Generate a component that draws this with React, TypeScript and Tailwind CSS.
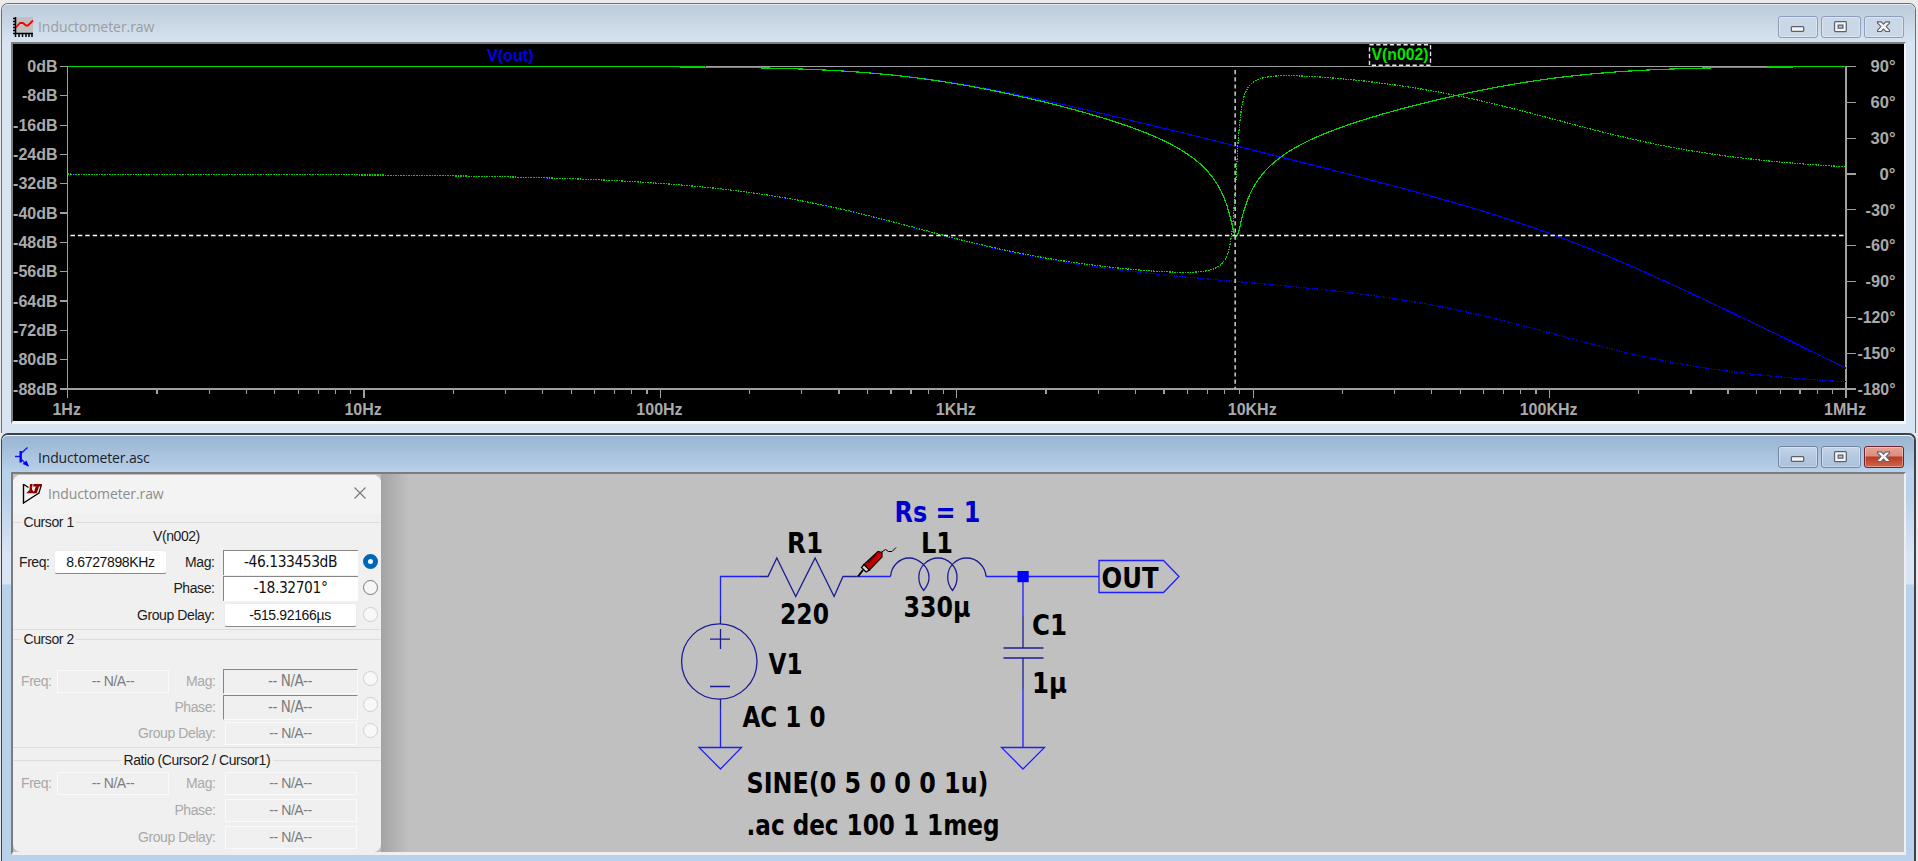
import React from "react";

/* ---------- AC response of the RLC network ---------- */

const R = 220;
const RS = 1;
const L = 330e-6;
const C = 1e-6;

const X0 = 67.2;
const X1 = 1845.5;
const Y0 = 66.5;
const Y1 = 389;
const DECADE = (X1 - X0) / 6;

const yMag = (db: number) => Y0 + (-db / 88) * (Y1 - Y0);
const yPhase = (deg: number) => Y0 + ((90 - deg) / 270) * (Y1 - Y0);

function buildTraces() {
  const outMag: string[] = [];
  const outPhase: string[] = [];
  const nMag: string[] = [];
  const nPhase: string[] = [];
  for (let i = 0; i <= 600; i++) {
    const w = 2 * Math.PI * Math.pow(10, i / 100);
    const x = (X0 + (i / 100) * DECADE).toFixed(2);
    const reactance = w * L - 1 / (w * C);
    const total = Math.hypot(R + RS, reactance);
    const totalAngle = Math.atan2(reactance, R + RS);
    const deg = 180 / Math.PI;
    outMag.push(`${x},${yMag(20 * Math.log10(1 / (w * C) / total)).toFixed(2)}`);
    outPhase.push(`${x},${yPhase(-90 - totalAngle * deg).toFixed(2)}`);
    nMag.push(`${x},${yMag(20 * Math.log10(Math.hypot(RS, reactance) / total)).toFixed(2)}`);
    nPhase.push(`${x},${yPhase((Math.atan2(reactance, RS) - totalAngle) * deg).toFixed(2)}`);
  }
  return {
    outMag: outMag.join(" "),
    outPhase: outPhase.join(" "),
    nMag: nMag.join(" "),
    nPhase: nPhase.join(" "),
  };
}

const traces = buildTraces();
const freqLabels = ["1Hz", "10Hz", "100Hz", "1KHz", "10KHz", "100KHz", "1MHz"];
const dbLabels = Array.from({ length: 12 }, (_, i) => `${i === 0 ? 0 : -8 * i}dB`);
const phaseLabels = Array.from({ length: 10 }, (_, i) => `${90 - 30 * i}°`);

function Plot() {
  return (
    <svg
      className="block h-full w-full bg-black font-['Liberation_Sans',sans-serif] text-[16px] font-bold"
      viewBox="13 44 1890 377"
    >
      <g stroke="#a0a0a0" strokeWidth="1.2" fill="none" shapeRendering="crispEdges">
        <path d={`M${X0} ${Y0}H1855M${X0} ${Y0}V398M${X1} ${Y0}V398M59 ${Y1}H1855`} />
        {dbLabels.map((t, i) => (
          <path key={t} d={`M59 ${Y0 + (i * (Y1 - Y0)) / 11}H${X0}`} />
        ))}
        {phaseLabels.map((t, i) => (
          <path key={t} d={`M${X1} ${Y0 + (i * (Y1 - Y0)) / 9}H1855`} />
        ))}
        {freqLabels.map((t, i) => (
          <path key={t} d={`M${X0 + i * DECADE} ${Y1}V398`} />
        ))}
        {[0, 1, 2, 3, 4, 5].flatMap((d) =>
          [2, 3, 4, 5, 6, 7, 8, 9].map((m) => (
            <path key={`${d}-${m}`} d={`M${X0 + (d + Math.log10(m)) * DECADE} ${Y1}V394`} />
          ))
        )}
      </g>
      <g fill="#aaaaaa">
        {dbLabels.map((t, i) => (
          <text key={t} x="57" y={Y0 + (i * (Y1 - Y0)) / 11 + 5.5} textAnchor="end">
            {t}
          </text>
        ))}
        {phaseLabels.map((t, i) => (
          <text
            key={t}
            x="1895"
            y={Y0 + (i * (Y1 - Y0)) / 9 + 5.7}
            textAnchor="end"
            textLength={[25, 25, 25, 16, 30, 30, 30, 38, 38, 38][i]}
            lengthAdjust="spacingAndGlyphs"
          >
            {t}
          </text>
        ))}
        {freqLabels.map((t, i) => (
          <text key={t} x={X0 + i * DECADE - 1} y="414.8" textAnchor="middle">
            {t}
          </text>
        ))}
      </g>
      <g fill="none" strokeWidth="1.2" shapeRendering="crispEdges">
        <polyline points={traces.outPhase} stroke="#0000e0" strokeDasharray="1.6 1" />
        <polyline points={traces.outMag} stroke="#0000f0" />
        <polyline points={traces.nPhase} stroke="#00d000" strokeDasharray="1.6 1" />
        <polyline points={traces.nMag} stroke="#00d800" />
      </g>
      <path d="M70 235.5H1845" stroke="#ffffff" strokeWidth="1.5" strokeDasharray="4.4 3" />
      <path d="M1234.7 70V389" stroke="#bcbcbc" strokeWidth="1.7" strokeDasharray="4.2 3" />
      <text x="486.5" y="60.5" fill="#0000f0" textLength="46.5" lengthAdjust="spacingAndGlyphs">
        V(out)
      </text>
      <rect x="1369" y="44.8" width="61" height="20.5" fill="none" stroke="#e6e6e6" strokeWidth="1.4" strokeDasharray="4.2 2.6" />
      <text x="1371" y="60" fill="#00e800" textLength="57" lengthAdjust="spacingAndGlyphs">
        V(n002)
      </text>
    </svg>
  );
}

/* ---------- Schematic ---------- */

const labels: { t: string; x: number; y: number; w: number; blue?: boolean }[] = [
  { t: "Rs = 1", x: 894, y: 521.5, w: 86, blue: true },
  { t: "R1", x: 786.5, y: 552.8, w: 36 },
  { t: "L1", x: 920.5, y: 552.8, w: 32 },
  { t: "220", x: 779.5, y: 623.5, w: 49 },
  { t: "330µ", x: 903, y: 617.3, w: 67 },
  { t: "V1", x: 768, y: 673.5, w: 34 },
  { t: "AC 1 0", x: 742, y: 726.5, w: 83 },
  { t: "SINE(0 5 0 0 0 1u)", x: 746, y: 792.5, w: 242 },
  { t: ".ac dec 100 1 1meg", x: 746, y: 834.8, w: 253 },
  { t: "C1", x: 1031.5, y: 634.8, w: 35 },
  { t: "1µ", x: 1031.5, y: 692.5, w: 35 },
  { t: "OUT", x: 1101, y: 587.5, w: 57 },
];

function Schematic() {
  return (
    <svg
      className="block h-full w-full bg-[#c0c0c0] font-['DejaVu_Sans_Condensed','DejaVu_Sans',sans-serif] text-[27.5px] font-bold"
      viewBox="13 474 1890 378"
    >
      <g fill="none" stroke="#1f1fff" strokeWidth="1.3">
        <path d="M758 576.5H720V616M720 709V747.5M857 576.5H890M985.5 576.5H1098.5M1022.5 576.5V616M1022.5 689V747.5" />
        <path d="M698.5 747.5H741L720 769ZM1001 747.5H1044L1022.5 769Z" />
        <path d="M1098.5 560.5H1163L1178.5 576.5L1163 592.5H1098.5Z" />
      </g>
      <g fill="none" stroke="#1c1c94" strokeWidth="1.3">
        <path d="M758 576.5H767.5L776.3 558L795.2 596.5L814.6 558L833.6 596.5L842.5 576.5H857" />
        <path d="M720 616V624M720 699V709M709.5 639.2H729.5M720 629V649M709.5 686.5H729.5" />
        <circle cx="718.8" cy="661.5" r="37.7" />
        <path d="M1022.5 616V648M1003 648H1043M1003 658H1043M1022.5 658V689" />
        <path d="M890 576.5C891 566 899 558 908.5 558C917 558 929 566 928.5 578C928.5 584 925 588 923.3 590.5C921 588 918.3 584 918.3 577C918.3 566 928 558 937.5 558C947 558 957 566 956.5 578C956.5 584 954 588 952 590.5C950 588 947.2 584 947.2 577C947.2 566 956 558 966 558C977 558 985 567 985.5 576.5" />
      </g>
      <rect x="1017" y="571" width="11.2" height="11.2" fill="#0000ff" />
      {/* voltage probe cursor */}
      <path d="M857.5 576.5L862.5 570" stroke="#000" strokeWidth="2" />
      <path d="M861 567.5L865.5 572L869 570L863.5 564.5Z" fill="#d8d8d8" stroke="#000" strokeWidth="1.3" />
      <path d="M863.5 564.5L877.5 551.5L881.5 552.5V557L869 570Z" fill="#c40000" stroke="#1a0000" strokeWidth="1.2" />
      <path d="M867.5 563L875.5 555" stroke="#600000" strokeWidth="1.2" />
      <path d="M881 552L885 549.5L888 551.5L891.5 551.5L895.5 547.5" fill="none" stroke="#000" strokeWidth="1" />
      {labels.map((l) => (
        <text
          key={l.t}
          x={l.x}
          y={l.y}
          fill={l.blue ? "#0000cc" : "#000000"}
          textLength={l.w}
          lengthAdjust="spacingAndGlyphs"
        >
          {l.t}
        </text>
      ))}
    </svg>
  );
}

/* ---------- Window chrome ---------- */

function Glyph({ kind }: { kind: "min" | "max" | "close" }) {
  return (
    <svg className="h-[22px] w-[40px]" viewBox="0 0 40 22">
      {kind === "min" && <rect x="13" y="10.6" width="13" height="5" rx="1" fill="#f4f4f4" stroke="#5a6070" strokeWidth="1.3" />}
      {kind === "max" && (
        <>
          <rect x="13.2" y="5.4" width="12.4" height="10.4" rx="1" fill="#f4f4f4" stroke="#5a6070" strokeWidth="1.3" />
          <rect x="17" y="9" width="5" height="3.2" fill="#b5c6da" stroke="#5a6070" strokeWidth="1.3" />
        </>
      )}
      {kind === "close" && (
        <path
          d="M13.2 5.6H17.2L19.5 8L21.8 5.6H25.8V6.9L22.3 10.6L25.8 14.4V15.7H21.8L19.5 13.2L17.2 15.7H13.2V14.4L16.7 10.6L13.2 6.9Z"
          fill="#f6f6f6"
          stroke="#5a6070"
          strokeWidth="1.2"
        />
      )}
    </svg>
  );
}

function WindowButtons({ active }: { active?: boolean }) {
  const plain = active
    ? "border-[#6f86a5] bg-linear-to-b from-[#c3d4e8] via-[#b4c8df] via-50% to-[#a9c2dd]"
    : "border-[#8e9dbb] bg-[#c9d7e6]";
  const close = active
    ? "border-[#6b2430] bg-[linear-gradient(#e6a295_0%,#dc8d7e_45%,#bd3a22_50%,#cd6650_100%)]"
    : plain;
  const box = "flex h-[22px] w-[40px] items-center justify-center rounded-[3px] border shadow-[inset_0_0_0_1px_rgba(255,255,255,0.35)]";
  return (
    <div className="flex gap-[3px]">
      <div className={`${box} ${plain}`}><Glyph kind="min" /></div>
      <div className={`${box} ${plain}`}><Glyph kind="max" /></div>
      <div className={`${box} ${close}`}><Glyph kind="close" /></div>
    </div>
  );
}

function PlotIcon() {
  return (
    <svg className="h-[22px] w-[22px]" viewBox="0 0 22 22">
      <rect x="4" y="1" width="17" height="16" fill="#c0c0c0" />
      <path d="M3.5 1V18M3 17.5H21" stroke="#000" strokeWidth="1.6" />
      <path d="M1 2.5H3M1 5.5H3M1 8.5H3M1 11.5H3M1 14.5H3M1 17.5H3M3.5 18V21M7 18V21M10.5 18V21M14 18V21M17 18V21M20 18V21" stroke="#000" strokeWidth="1.5" />
      <path d="M4 11.5L8 7H11L14 9.5H16L21 4.5" fill="none" stroke="#ff0000" strokeWidth="1.8" />
    </svg>
  );
}

function TransistorIcon() {
  return (
    <svg className="h-[22px] w-[16px]" viewBox="0 0 16 22">
      <path d="M0 10.5H5M12.5 1.5L6 7.5M6 13L13 20" stroke="#1414ff" strokeWidth="1.4" fill="none" />
      <path d="M5.7 5V16.5" stroke="#0000ff" strokeWidth="2.4" />
      <path d="M14 20.5L7.5 18L11.5 14.5Z" fill="#0000ff" />
    </svg>
  );
}

function LtIcon() {
  return (
    <svg className="h-[21px] w-[21px]" viewBox="0 0 21 21">
      <path d="M1.5 1V20L17 10" fill="none" stroke="#000" strokeWidth="1.4" />
      <path d="M1.5 1.2L6.5 4.5M16.8 10.5L19.5 1.5" stroke="#000" strokeWidth="1.2" />
      <path d="M8 1H11.5L10 6.5L13 10.2H4.2L7.5 7Z" fill="#8b0000" />
      <path d="M10.5 1H20L19.2 3.6H17L14.8 10.2H11.3L13.8 3.6H11Z" fill="#8b0000" />
      <path d="M11.2 1L10.3 4.5L12 8" stroke="#f0f0f0" strokeWidth="0.8" fill="none" />
    </svg>
  );
}

/* ---------- Cursor readout dialog ---------- */

type Look = "edit" | "sunken" | "off" | "offSunken";

function Field({ look, wide, children }: { look: Look; wide?: boolean; children: React.ReactNode }) {
  const skin = {
    edit: "mx-px h-[24px] rounded-[3px] border border-b-[#8a8a8a] border-[#ececec] bg-white text-[14px] tracking-[-0.35px] text-[#111]",
    sunken: "h-[25px] border-l border-t border-[#868686] bg-white font-['DejaVu_Sans_Condensed','DejaVu_Sans',sans-serif] text-[15.4px] text-[#111]",
    off: "ml-[2px] mr-px h-[23px] border border-[#fafafa] bg-[#f0f0f0] text-[14px] tracking-[-0.4px] text-[#7c7c7c]",
    offSunken: "h-[25px] border border-b-[#fbfbfb] border-l-[#868686] border-r-[#fbfbfb] border-t-[#868686] bg-[#f0f0f0] font-['DejaVu_Sans_Condensed','DejaVu_Sans',sans-serif] text-[15px] text-[#7c7c7c]",
  }[look];
  return (
    <div className={wide ? "w-[135px]" : "w-[115px]"}>
      <div className={`flex items-center justify-center whitespace-pre ${skin}`}>{children}</div>
    </div>
  );
}

function Radio({ state, raised }: { state: "on" | "ready" | "off"; raised?: boolean }) {
  const skin = {
    on: "border-[5px] border-[#0067b8] bg-white",
    ready: "border border-[#777] bg-[#f6f6f6]",
    off: "border border-[#cfcfcf] bg-[#f8f8f8]",
  }[state];
  return <span className={`ml-[5px] h-[15px] w-[15px] rounded-full ${raised ? "mb-[5px]" : "mb-px"} ${skin}`} />;
}

function Row(p: {
  freq?: string;
  freqLook?: Look;
  label: string;
  value: string;
  look: Look;
  radio?: "on" | "ready" | "off";
  dim?: boolean;
}) {
  const tone = p.dim ? "text-[#a9a9a9]" : "text-[#1c1c1c]";
  return (
    <div className={`flex h-[26px] items-center ${tone}`}>
      <span className={p.dim ? "w-[42px] pl-[8px]" : "w-[40px] pl-[6px]"}>{p.freq ? "Freq:" : ""}</span>
      {p.freq ? <Field look={p.freqLook ?? "edit"}>{p.freq}</Field> : <span />}
      <span className="flex-1 text-right">{p.label}</span>
      <span className={p.dim ? "w-[7px]" : "w-[8px]"} />
      <Field look={p.look} wide>{p.value}</Field>
      <span className="flex w-[23.5px] items-center">{p.radio && <Radio state={p.radio} raised={p.dim} />}</span>
    </div>
  );
}

function Legend({ children, lead }: { children: React.ReactNode; lead: string }) {
  return (
    <div className="flex h-[17px] items-center text-[#1c1c1c]">
      <span className={`h-px bg-[#dcdcdc] ${lead}`} />
      <span className="px-[2.5px]">{children}</span>
      <span className="h-px flex-1 bg-[#dcdcdc]" />
    </div>
  );
}

const NA = "-- N/A--";

function CursorDialog() {
  return (
    <div className="absolute left-0 top-[1px] flex h-[377px] w-[368px] flex-col overflow-hidden rounded-[8px] bg-[#f0f0f0] font-['Liberation_Sans',sans-serif] text-[14px] tracking-[-0.42px]">
      <div className="flex h-[39px] shrink-0 items-center bg-[#f3f3f3] pb-[3px] pl-[9px] pr-[15px]">
        <LtIcon />
        <span className="ml-[5px] flex-1 font-['Open_Sans',sans-serif] text-[14px] tracking-[-0.1px] text-[#8c8c8c]">Inductometer.raw</span>
        <svg className="h-[12px] w-[12px]" viewBox="0 0 12 12">
          <path d="M0.5 0.5L11.5 11.5M11.5 0.5L0.5 11.5" stroke="#777" strokeWidth="1.1" />
        </svg>
      </div>
      <div className="flex h-[116px] shrink-0 flex-col border-b border-[#dcdcdc]">
        <Legend lead="w-[8px]">Cursor 1</Legend>
        <div className="mb-[8px] h-[10px] pl-[140px] leading-[10px] text-[#1c1c1c]">V(n002)</div>
        <Row freq="8.6727898KHz" label="Mag:" value="-46.133453dB" look="sunken" radio="on" />
        <Row label="Phase:" value="-18.32701°" look="sunken" radio="ready" />
        <div className="mt-px"><Row label="Group Delay:" value="-515.92166µs" look="edit" radio="off" /></div>
      </div>
      <div className="mt-px flex h-[117px] shrink-0 flex-col border-b border-[#dcdcdc]">
        <div className="mb-[20px]"><Legend lead="w-[8px]">Cursor 2</Legend></div>
        <Row dim freq={NA} freqLook="off" label="Mag:" value={NA} look="offSunken" radio="off" />
        <Row dim label="Phase:" value={NA} look="offSunken" radio="off" />
        <Row dim label="Group Delay:" value={NA} look="off" radio="off" />
      </div>
      <div className="mt-[4px] flex flex-col">
        <div className="mb-[1px]"><Legend lead="w-[108px]">Ratio (Cursor2 / Cursor1)</Legend></div>
        <Row dim freq={NA} freqLook="off" label="Mag:" value={NA} look="off" />
        <div className="my-px"><Row dim label="Phase:" value={NA} look="off" /></div>
        <Row dim label="Group Delay:" value={NA} look="off" />
      </div>
    </div>
  );
}

/* ---------- App ---------- */

export default function App() {
  return (
    <div className="flex h-[861px] w-[1918px] flex-col overflow-hidden bg-[#ebebeb] pl-px pr-[2px] pt-[3px]">
      <section className="flex h-[430px] shrink-0 flex-col rounded-t-[7px] border-x border-t border-[#6b6f74] bg-[#d7e4f2]">
        <header className="flex h-[38px] shrink-0 items-center rounded-t-[6px] border-t border-[#e4edf6] bg-linear-to-b from-[#bdcbda] to-[#d6e3f1] pl-[10px] pr-[11px] pt-[6px]">
          <PlotIcon />
          <span className="ml-[4px] flex-1 font-['Open_Sans',sans-serif] text-[14px] tracking-[-0.05px] text-[#9a9da1]">Inductometer.raw</span>
          <WindowButtons />
        </header>
        <div className="mx-[9px] h-[382px] border-[2px] border-b-[3px] border-b-[#f5f5f5] border-l-[#7c7c7c] border-r-[#f5f5f5] border-t-[#7c7c7c]">
          <Plot />
        </div>
      </section>
      <section className="flex h-[440px] shrink-0 flex-col rounded-t-[7px] border-l border-r-[2px] border-t-[2px] border-[#3c4247] bg-[linear-gradient(#b9d1ea_0px,#b9d1ea_60px,#d9e5f4_120px,#d9e5f4_149px,#b9d1ea_150px)]">
        <header className="flex h-[37px] shrink-0 items-center rounded-t-[6px] border-t border-[#f2f7fb] bg-linear-to-b from-[#9ab5d2] to-[#b8d0e9] pl-[13px] pr-[10px] pt-[6px]">
          <TransistorIcon />
          <span className="ml-[7px] flex-1 font-['Open_Sans',sans-serif] text-[14px] tracking-[-0.15px] text-[#1b222b]">Inductometer.asc</span>
          <WindowButtons active />
        </header>
        <div className="relative ml-[9px] mr-[8px] h-[383px] border-[2px] border-b-[3px] border-b-[#efefef] border-l-[#7c7c7c] border-r-[#efefef] border-t-[#7c7c7c]">
          <Schematic />
          <div className="absolute left-[368px] top-0 h-[378px] w-[28px] bg-linear-to-r from-black/15 to-transparent" />
          <CursorDialog />
        </div>
        <div className="flex-1 bg-[#b9d1ea]" />
      </section>
    </div>
  );
}
